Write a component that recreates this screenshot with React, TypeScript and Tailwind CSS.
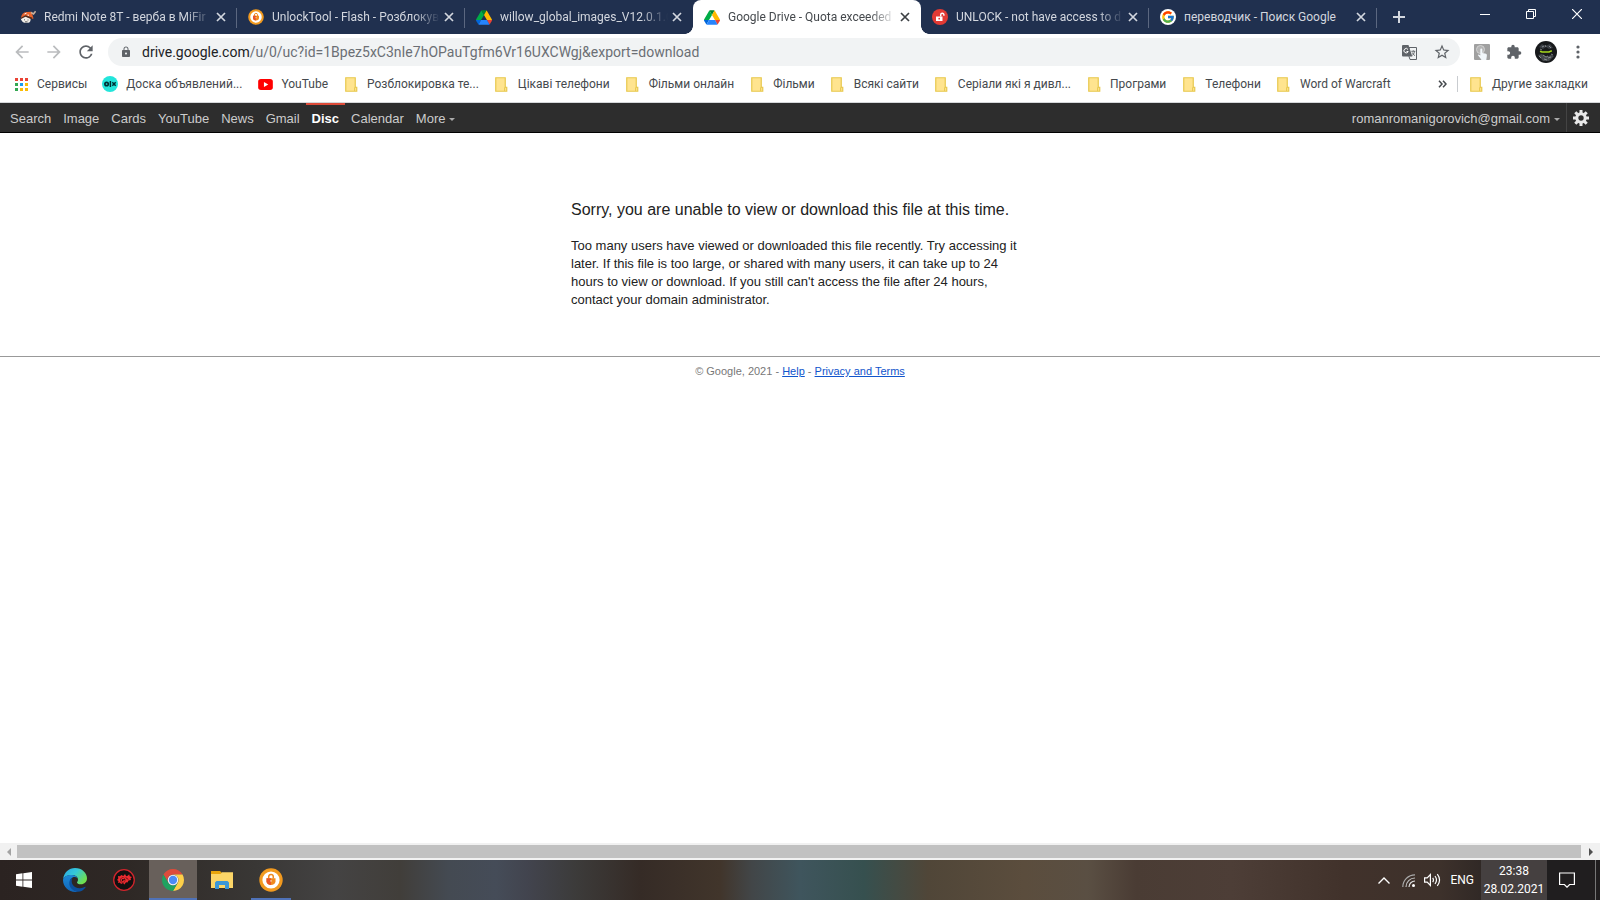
import React from "react";
import { FcGoogle } from "react-icons/fc";
import { MdExtension, MdStarBorder, MdLock, MdRefresh, MdArrowBack, MdArrowForward } from "react-icons/md";

const ui = "font-['Roboto','Noto_Sans',sans-serif]";
const arial = "font-['Liberation_Sans',Arial,sans-serif]";

function DriveLogo() {
  return (
    <svg viewBox="0 0 87.3 78" className="h-[15px] w-4">
      <path fill="#0066da" d="m6.6 66.85 3.85 6.65c.8 1.4 1.95 2.5 3.3 3.3l13.75-23.8h-27.5c0 1.55.4 3.1 1.2 4.5z" />
      <path fill="#00ac47" d="m43.65 25-13.75-23.8c-1.35.8-2.5 1.9-3.3 3.3l-25.4 44a9.06 9.06 0 0 0 -1.2 4.5h27.5z" />
      <path fill="#ea4335" d="m73.55 76.8c1.35-.8 2.5-1.9 3.3-3.3l1.6-2.75 7.65-13.25c.8-1.4 1.2-2.95 1.2-4.5h-27.502l5.852 11.5z" />
      <path fill="#00832d" d="m43.65 25 13.75-23.8c-1.35-.8-2.9-1.2-4.5-1.2h-18.5c-1.6 0-3.15.45-4.5 1.2z" />
      <path fill="#2684fc" d="m59.8 53h-32.3l-13.75 23.8c1.35.8 2.9 1.2 4.5 1.2h50.8c1.6 0 3.15-.45 4.5-1.2z" />
      <path fill="#ffba00" d="m73.4 26.5-12.7-22c-.8-1.4-1.95-2.5-3.3-3.3l-13.75 23.8 16.15 28h27.45c0-1.55-.4-3.1-1.2-4.5z" />
    </svg>
  );
}

function FirmLogo() {
  return (
    <svg viewBox="0 0 16 16" className="h-4 w-4">
      <path d="M1 9Q1.500 3.300 6.500 3L11.500 2.800L13.500 9.500L10.500 10z" fill="#e8632c" />
      <path d="M.8 9.500L5 7L10.500 9.500Q11 12.800 8.500 13.800H4.500Q1.500 13 .8 9.500z" fill="#f3efe9" />
      <path d="M.8 8.700L5.500 6.200L12.500 8.800L11.500 10.300L5.500 7.800L1 10z" fill="#4a2c22" />
      <path d="M4.500 5l2-.8M7.500 6l1.500.3" stroke="#fff" strokeWidth="1" />
      <path d="M11 3.500L13.500 5L15.600 2.200" stroke="#c9b09c" strokeWidth="1.600" fill="none" />
      <path d="M4 10.800h1M7.500 11h1M5 12.800h2.500" stroke="#555" strokeWidth=".9" />
    </svg>
  );
}

function UnlockToolLogo({ className }: { className: string }) {
  return (
    <svg viewBox="0 0 24 24" className={className}>
      <circle cx="12" cy="12" r="11.700" fill="#f29a1f" />
      <circle cx="12" cy="12" r="8.600" fill="#fff" />
      <path d="M9.700 10.500V9a2.300 2.300 0 0 1 4.600-.3v1.800" fill="none" stroke="#f08a1e" strokeWidth="1.500" />
      <path d="M7.500 10.200h9v3a4.500 3.900 0 0 1-9 0z" fill="#f08a1e" />
      <path d="M7.500 10.200H12v6.900a4.500 3.900 0 0 1-4.500-3.900z" fill="#e8562a" />
      <path d="M11.600 12h.8v1.800h-.8z" fill="#fff" />
    </svg>
  );
}

function RedLockLogo() {
  return (
    <svg viewBox="0 0 16 16" className="h-4 w-4">
      <circle cx="8" cy="8" r="8" fill="#e13a34" />
      <path d="M4 7.500h6.500v4.500H4z" fill="#fff" />
      <path d="M8.700 7.500V5.800a1.600 1.600 0 0 1 3.200 0v1" fill="none" stroke="#fff" strokeWidth="1.400" />
      <circle cx="7.200" cy="9.700" r=".9" fill="#e13a34" />
    </svg>
  );
}

function Folder() {
  return (
    <svg viewBox="0 0 13 15" className="h-[15px] w-[13px]">
      <path d="M.75.75h9.500v9.500h1.500v4H.75z" fill="#ffe48f" stroke="#e8c84e" strokeWidth="1.200" />
      <path d="M9.600 14V11q0-.8.9-.8" fill="none" stroke="#e8c84e" strokeWidth="1" />
    </svg>
  );
}

function AppsGrid() {
  const colors = ["#ea4335", "#ea4335", "#ea4335", "#34a853", "#1a9cf0", "#fbbc05", "#34a853", "#fbbc05", "#fbbc05"];
  return (
    <svg viewBox="0 0 13 13" className="h-[13px] w-[13px]">
      {colors.map((c, i) => (
        <rect key={i} x={(i % 3) * 5} y={Math.floor(i / 3) * 5} width="3" height="3" fill={c} />
      ))}
    </svg>
  );
}

function OlxLogo() {
  return (
    <svg viewBox="0 0 16 16" className="h-4 w-4">
      <circle cx="8" cy="8" r="8" fill="#23e5db" />
      <circle cx="4.600" cy="8" r="1.700" fill="none" stroke="#002f34" strokeWidth="1.700" />
      <path d="M8.400 5v6" stroke="#002f34" strokeWidth="1.500" />
      <path d="M10.300 6.300l3.400 3.400M13.700 6.300l-3.400 3.400" stroke="#002f34" strokeWidth="1.500" />
    </svg>
  );
}

function YouTubeLogo() {
  return (
    <svg viewBox="0 0 16 12" className="h-[11px] w-[15px]">
      <rect width="16" height="12" rx="3" fill="#f00" />
      <path d="M6.300 3.300v5.400L11 6z" fill="#fff" />
    </svg>
  );
}

function CloseX({ className = "" }: { className?: string }) {
  return (
    <svg viewBox="0 0 10 10" className={"h-[10px] w-[10px] " + className}>
      <path d="M1 1l8 8M9 1l-8 8" stroke="currentColor" strokeWidth="1.700" fill="none" />
    </svg>
  );
}

type Tab = { title: string; icon: React.ReactNode; active?: boolean; noSep?: boolean };

const tabs: Tab[] = [
  { title: "Redmi Note 8T - верба в MiFir", icon: <FirmLogo /> },
  { title: "UnlockTool - Flash - Розблокув", icon: <UnlockToolLogo className="h-4 w-4" /> },
  { title: "willow_global_images_V12.0.1.0", icon: <DriveLogo />, noSep: true },
  { title: "Google Drive - Quota exceeded", icon: <DriveLogo />, active: true },
  { title: "UNLOCK - not have access to d", icon: <RedLockLogo /> },
  {
    title: "переводчик - Поиск Google",
    icon: (
      <span className="flex h-4 w-4 items-center justify-center rounded-full bg-white">
        <FcGoogle className="h-[14px] w-[14px]" />
      </span>
    ),
  },
];

function TabItem({ tab, last }: { tab: Tab; last: boolean }) {
  return (
    <div
      className={
        "relative flex h-[34px] w-[228px] min-w-0 shrink items-center px-[11px] " +
        (tab.active ? "rounded-t-lg bg-white text-[#45494d]" : "text-[#d3d7df]")
      }
    >
      {tab.active && (
        <>
          <span className="absolute bottom-0 -left-2 h-2 w-2 bg-[radial-gradient(circle_at_0_0,transparent_7.5px,#fff_8px)]" />
          <span className="absolute bottom-0 -right-2 h-2 w-2 bg-[radial-gradient(circle_at_100%_0,transparent_7.5px,#fff_8px)]" />
        </>
      )}
      <span className="shrink-0">{tab.icon}</span>
      <a
        href="#"
        className={
          "ml-2 min-w-0 flex-1 overflow-hidden whitespace-nowrap text-[12px] leading-4 " +
          (last ? "" : "[mask-image:linear-gradient(to_right,black_84%,transparent)]")
        }
      >
        {tab.title}
      </a>
      <button type="button" aria-label="Закрыть вкладку" className="ml-1 shrink-0">
        <CloseX className={tab.active ? "text-[#3c4043]" : ""} />
      </button>
      {!tab.active && !tab.noSep && <span className="absolute top-2 right-0 h-5 w-px bg-[#5b6780]" />}
    </div>
  );
}

function TabStrip() {
  return (
    <div className="flex h-[34px] items-center bg-[#20304f] pl-[9px]">
      {tabs.map((t, i) => (
        <TabItem key={t.title} tab={t} last={i === tabs.length - 1} />
      ))}
      <button type="button" aria-label="Новая вкладка" className="ml-4 shrink-0 text-[#d3d7df]">
        <svg viewBox="0 0 12 12" className="h-3 w-3">
          <path d="M6 0v12M0 6h12" stroke="currentColor" strokeWidth="2" />
        </svg>
      </button>
      <div className="ml-auto flex shrink-0 self-start text-white">
        <button type="button" aria-label="Свернуть" className="flex h-7 w-[46px] items-center justify-center">
          <svg viewBox="0 0 10 10" className="h-[10px] w-[10px]"><path d="M0 5.500h10" stroke="currentColor" /></svg>
        </button>
        <button type="button" aria-label="Развернуть" className="flex h-7 w-[46px] items-center justify-center">
          <svg viewBox="0 0 10 10" className="h-[10px] w-[10px]" fill="none" stroke="currentColor">
            <path d="M.5 2.500h7v7h-7zM2.500 2.500v-2h7v7h-2" />
          </svg>
        </button>
        <button type="button" aria-label="Закрыть" className="flex h-7 w-[46px] items-center justify-center">
          <svg viewBox="0 0 10 10" className="h-[10px] w-[10px]"><path d="M0 0l10 10M10 0L0 10" stroke="currentColor" strokeWidth="1.200" /></svg>
        </button>
      </div>
    </div>
  );
}

function TranslateIcon() {
  return (
    <svg viewBox="0 0 15 15" className="h-[15px] w-[15px]">
      <path d="M7 2.500h7.500v12H8L7 11.500z" fill="#f1f3f4" stroke="#5f6368" />
      <path d="M0 1Q0 0 1 0H6.500L10.300 11.500H1a1 1 0 0 1-1-1z" fill="#5f6368" />
      <path d="M6 4.500A2.200 2.200 0 1 0 6.200 6.500H4.500" fill="none" stroke="#fff" strokeWidth="1" />
      <path d="M9.300 6.300h4M11.300 5.300v1M12.600 6.300Q12 9.500 10 10.700M10.300 7.500Q11 9.500 13 10.700" fill="none" stroke="#5f6368" strokeWidth=".9" />
    </svg>
  );
}

function Toolbar() {
  return (
    <div className="flex h-9 items-center bg-white pl-3 pr-[14px]">
      <div className="flex items-center gap-3">
        <button type="button" aria-label="Назад" className="text-[#babcbe]"><MdArrowBack className="h-5 w-5" /></button>
        <button type="button" aria-label="Вперёд" className="text-[#babcbe]"><MdArrowForward className="h-5 w-5" /></button>
        <button type="button" aria-label="Обновить" className="text-[#5f6368]"><MdRefresh className="h-5 w-5" /></button>
      </div>
      <div className="ml-3 flex h-7 min-w-0 flex-1 items-center rounded-full bg-[#f1f3f4] pl-3 pr-[9px]">
        <MdLock className="h-3 w-3 shrink-0 text-[#5f6368]" />
        <a href="#" className="ml-[10px] min-w-0 flex-1 truncate text-[14px] leading-5 text-[#6b6f74]">
          <span className="text-[#202124]">drive.google.com</span>/u/0/uc?id=1Bpez5xC3nIe7hOPauTgfm6Vr16UXCWgj&amp;export=download
        </a>
        <button type="button" aria-label="Перевести" className="ml-3"><TranslateIcon /></button>
        <button type="button" aria-label="В закладки" className="ml-4 text-[#5f6368]"><MdStarBorder className="h-[18px] w-[18px]" /></button>
      </div>
      <button type="button" aria-label="Расширение" className="ml-[14px]">
        <svg viewBox="0 0 16 16" className="h-4 w-4">
          <rect width="16" height="16" rx="1" fill="#a0a0a0" />
          <circle cx="6.500" cy="5.500" r="4" fill="#b4b4b4" stroke="#d2d2d2" />
          <path d="M6.500 14.500L3.800 11l1-.6 1.500 1V5.500a1 1 0 0 1 2 0V9l3.800.8q1 .4.8 1.700L12.300 16H7.500z" fill="#f2f7fb" />
        </svg>
      </button>
      <button type="button" aria-label="Расширения" className="ml-4 text-[#5f6368]"><MdExtension className="h-4 w-4" /></button>
      <button type="button" aria-label="Профиль" className="ml-[13px]">
        <svg viewBox="0 0 22 22" className="h-[22px] w-[22px]">
          <circle cx="11" cy="11" r="11" fill="#17191b" />
          <path d="M4 6l3-3 3 2 5-2 3 4-4 1-3-2-3 2z" fill="#3a3e44" />
          <path d="M3 14l4-1 4 3 5-2 3 1-5 5-6 0z" fill="#45494d" />
          <path d="M8 14l3 2 2-1M14 5l2 2M5 8l2 1M9 18l3 1M13 17l3-1M7 6l2-1M4 15l2 2M16 13l2 1M10 4l1 2" stroke="#9b9fa2" strokeWidth=".8" fill="none" />
          <path d="M5 10.300l2 .7h7l2.800-1.300" stroke="#a5d61e" strokeWidth="1.500" fill="none" />
        </svg>
      </button>
      <button type="button" aria-label="Меню" className="ml-[13px] text-[#5f6368]">
        <svg viewBox="0 0 16 16" className="h-4 w-4" fill="currentColor">
          <circle cx="8" cy="3" r="1.600" /><circle cx="8" cy="8" r="1.600" /><circle cx="8" cy="13" r="1.600" />
        </svg>
      </button>
    </div>
  );
}

const bookmarks: { label: string; icon?: React.ReactNode }[] = [
  { label: "Сервисы", icon: <AppsGrid /> },
  { label: "Доска объявлений...", icon: <OlxLogo /> },
  { label: "YouTube", icon: <YouTubeLogo /> },
  { label: "Розблокировка те..." },
  { label: "Цікаві телефони" },
  { label: "Фільми онлайн" },
  { label: "Фільми" },
  { label: "Всякі сайти" },
  { label: "Серіали які я дивл..." },
  { label: "Програми" },
  { label: "Телефони" },
  { label: "Word of Warcraft" },
];

function Bookmark({ label, icon }: { label: string; icon?: React.ReactNode }) {
  return (
    <a href="#" className="flex shrink-0 items-center gap-2 whitespace-nowrap text-[12px] leading-4 text-[#45494d]">
      <span className="flex w-4 items-center justify-center">{icon ?? <Folder />}</span>
      {label}
    </a>
  );
}

function BookmarksBar() {
  return (
    <nav className="flex h-[33px] items-center border-b border-[#d5d7da] bg-white pb-1 pl-[13px] pr-3">
      <div className="flex min-w-0 flex-1 items-center gap-[15px] overflow-hidden">
        {bookmarks.map((b) => (
          <Bookmark key={b.label} {...b} />
        ))}
      </div>
      <button type="button" aria-label="Ещё закладки" className="ml-2 text-[#45494d]">
        <svg viewBox="0 0 9 8" className="h-2 w-[9px]"><path d="M1 .8L4 4 1 7.200M5 .8L8 4 5 7.200" stroke="currentColor" strokeWidth="1.500" fill="none" /></svg>
      </button>
      <span className="mr-[10px] ml-[10px] h-4 w-px bg-[#c9ccd0]" />
      <Bookmark label="Другие закладки" />
    </nav>
  );
}

function Caret() {
  return <span className="ml-1 inline-block border-x-[3px] border-t-[3px] border-x-transparent border-t-[#aaa] align-middle" />;
}

function Gear() {
  return (
    <svg viewBox="0 0 16 16" className="h-4 w-4">
      <g stroke="#e8e8e8" strokeWidth="3">
        <path d="M8 0v4M8 12v4M0 8h4M12 8h4M2.300 2.300l2.800 2.800M10.900 10.900l2.800 2.800M13.700 2.300l-2.800 2.800M5.100 10.900l-2.800 2.800" />
      </g>
      <circle cx="8" cy="8" r="4.200" fill="none" stroke="#e8e8e8" strokeWidth="3" />
    </svg>
  );
}

function GoogleBar() {
  const links = ["Search", "Image", "Cards", "YouTube", "News", "Gmail", "Disc", "Calendar"];
  return (
    <nav className={"flex h-[30px] items-stretch border-b border-black bg-[#2d2d2d] pr-[11px] pl-1 text-[13px] text-[#ccc] " + arial}>
      {links.map((l) => (
        <a
          key={l}
          href="#"
          className={
            "border-t-2 px-1.5 leading-[27px] " +
            (l === "Disc" ? "border-[#dd4b39] font-bold text-white" : "border-transparent")
          }
        >
          {l}
        </a>
      ))}
      <a href="#" className="border-t-2 border-transparent px-1.5 leading-[27px]">More<Caret /></a>
      <a href="#" className="ml-auto border-t-2 border-transparent px-1.5 leading-[27px]">romanromanigorovich@gmail.com<Caret /></a>
      <span className="w-px bg-[#444]" />
      <button type="button" aria-label="Settings" className="ml-1.5"><Gear /></button>
    </nav>
  );
}

function Page() {
  return (
    <main className={"flex-1 bg-white text-[#222] " + arial}>
      <section className="mx-auto w-[458px] pt-[67px] pb-[47px]">
        <h1 className="text-[16px] leading-5">Sorry, you are unable to view or download this file at this time.</h1>
        <p className="mt-[17px] text-[13px] leading-[18px]">
          Too many users have viewed or downloaded this file recently. Try accessing it later. If this file is too large,
          or shared with many users, it can take up to 24 hours to view or download. If you still can't access the file
          after 24 hours, contact your domain administrator.
        </p>
      </section>
      <footer className="border-t border-[#999] pt-2 text-center text-[11px] leading-[13px] text-[#777]">
        © Google, 2021 - <a href="#" className="text-[#15c] underline">Help</a> -{" "}
        <a href="#" className="text-[#15c] underline">Privacy and Terms</a>
      </footer>
    </main>
  );
}

function ScrollBar() {
  return (
    <div className="flex h-[17px] items-center bg-[#f1f1f1]">
      <button type="button" aria-label="Scroll left" className="flex w-[17px] justify-center">
        <svg viewBox="0 0 4 8" className="h-2 w-1"><path d="M4 0v8L0 4z" fill="#a3a3a3" /></svg>
      </button>
      <div className="h-[13px] flex-1 bg-[#c1c1c1]" />
      <button type="button" aria-label="Scroll right" className="flex w-[19px] justify-center">
        <svg viewBox="0 0 4 8" className="h-2 w-1"><path d="M0 0v8l4-4z" fill="#505050" /></svg>
      </button>
    </div>
  );
}

function EdgeLogo() {
  return (
    <svg viewBox="0 0 24 24" className="h-6 w-6">
      <defs>
        <linearGradient id="edgeTop" x1="0" y1="0" x2="1" y2=".6">
          <stop offset="0" stopColor="#2aa7e8" /><stop offset=".5" stopColor="#35c8d8" /><stop offset="1" stopColor="#6fe04f" />
        </linearGradient>
        <linearGradient id="edgeLeft" x1="0" y1="0" x2="0" y2="1">
          <stop offset="0" stopColor="#1c8ad8" /><stop offset="1" stopColor="#1166b8" />
        </linearGradient>
      </defs>
      <path d="M.2 10.800C1 4.500 6 0 12 0c7 0 12 5 12 10.300 0 3.600-2.700 6-6 6-2.700 0-4-1-4-1.800 0-.6 1-1.100 1-2.700C15 9 12.300 7 8.800 7 4.500 7 1.300 8.500.2 10.800z" fill="url(#edgeTop)" />
      <path d="M0 12C.3 8.700 4 7 8.800 7c3 0 5 1.400 5.800 3-1-.8-2-1-3-1-3 0-4.500 2.500-4.500 5.300 0 4.500 3 7.900 7.400 9.400C7 25 0 19.500 0 12z" fill="url(#edgeLeft)" />
      <path d="M8.800 11.800C8 17 12 20.500 17 20.200c2 0 3.700-.7 5-1.400.5-.2.8.2.5.7-2 3-5 4.500-8.300 4.300-5-.8-8.200-5-7.900-9 .2-3 1.300-4.600 3.500-5.400C9 10 8.900 11 8.800 11.800z" fill="#0c4f9c" />
    </svg>
  );
}

function RedToolLogo() {
  return (
    <svg viewBox="0 0 22 22" className="h-[22px] w-[22px]">
      <circle cx="11" cy="11" r="10.300" fill="#111" stroke="#d0252c" strokeWidth="1.300" />
      <path d="M5 7l2 .3 1.300-1.300 2 1 1.700-2 1.200 2.200 1.500-.5 1.500-1.500.5 2 2.300.8-1.500 1.500.5 1.500-2.500.5-1 2-1.500-.3-1.500 2.300-1.500-1.500-2 1-1-1.500L5 14l.5-2L4 11l1.300-1.500z" fill="#ee2a30" />
      <circle cx="9.800" cy="11" r="2.500" fill="#181010" />
      <path d="M11.400 10.200a1.700 1.700 0 1 0 0 1.700h-1.300" fill="none" stroke="#ee2a30" strokeWidth="1.100" />
      <path d="M13 8.500l2 2" stroke="#181010" strokeWidth=".9" />
    </svg>
  );
}

function ChromeLogo() {
  return (
    <svg viewBox="2 2 44 44" className="h-[22px] w-[22px]">
      <path fill="#de4b3b" d="M24 13H43.050A22 22 0 0 0 4.950 13L14.470 29.500A11 11 0 0 1 24 13z" />
      <path fill="#fdcf49" d="M33.530 29.500L24 46A22 22 0 0 0 43.050 13H24A11 11 0 0 1 33.530 29.500z" />
      <path fill="#1fa260" d="M14.470 29.500L4.950 13A22 22 0 0 0 24 46L33.530 29.500A11 11 0 0 1 14.470 29.500z" />
      <circle cx="24" cy="24" r="10.500" fill="#f4f4f4" />
      <circle cx="24" cy="24" r="8.300" fill="#4c8bf5" />
    </svg>
  );
}

function ExplorerLogo() {
  return (
    <svg viewBox="0 0 22 18" className="h-[18px] w-[22px]">
      <path d="M0 0h9l1.500 1.500V4H0z" fill="#e8a50c" />
      <path d="M0 3h9.500L11 1.200h11V17H0z" fill="#fbd567" />
      <path d="M4 18v-6.500L5.500 10h11l1.500 1.500V18h-4v-4H8v4z" fill="#3a97d8" />
    </svg>
  );
}

function WindowsLogo() {
  return (
    <svg viewBox="0 0 16 16" className="h-4 w-4" fill="#fff">
      <path d="M0 2.200L6.500 1.300v6.200H0zM7.300 1.200L16 0v7.500H7.300zM0 8.400h6.500v6.300L0 13.800zM7.300 8.400H16V16l-8.700-1.200z" />
    </svg>
  );
}

function Taskbar() {
  const cell = "flex h-10 w-12 items-center justify-center";
  return (
    <div
      className={
        "flex h-10 shrink-0 items-stretch text-[12px] text-white bg-[linear-gradient(90deg,#2b2321_0%,#2e2825_8%,#393735_16%,#444343_21%,#413e3a_25%,#444a52_28%,#454c58_31%,#42444e_33%,#3c3b3a_36%,#352b26_40%,#41352b_45%,#424648_47%,#3f555d_50%,#36504f_54%,#504638_58%,#5b4d3d_64%,#5a4f43_68%,#4a3c34_71%,#4d3e37_77%,#41322b_84%,#3d312b_90%,#201e1f_96%)] " +
        ui
      }
    >
      <button type="button" aria-label="Start" className={cell}><WindowsLogo /></button>
      <button type="button" aria-label="Edge" className={cell + " ml-[3px]"}><EdgeLogo /></button>
      <button type="button" aria-label="Tool" className={cell + " ml-px"}><RedToolLogo /></button>
      <button type="button" aria-label="Chrome" className={cell + " ml-px border-b-2 border-[#4f72b8] bg-[#68605b] pt-[2px]"}><ChromeLogo /></button>
      <button type="button" aria-label="Explorer" className={cell + " ml-px"}><ExplorerLogo /></button>
      <button type="button" aria-label="UnlockTool" className="ml-[5px] flex h-10 w-10 items-center justify-center border-b-2 border-[#4f72b8] pt-[2px]">
        <UnlockToolLogo className="h-6 w-6" />
      </button>
      <div className="ml-auto flex items-center">
        <button type="button" aria-label="Show hidden icons" className="mr-3">
          <svg viewBox="0 0 12 7" className="h-[7px] w-3"><path d="M.5 6.500L6 1l5.500 5.500" fill="none" stroke="#fff" strokeWidth="1.400" /></svg>
        </button>
        <svg viewBox="0 0 13 13" className="h-[13px] w-[13px]" fill="none" strokeWidth="1.200">
          <path d="M.8 13A12.200 12.200 0 0 1 13 .8" stroke="#aaa" />
          <path d="M4 13A9 9 0 0 1 13 4" stroke="#bbb" />
          <path d="M7 13A6 6 0 0 1 13 7" stroke="#ddd" />
          <circle cx="11.500" cy="11.500" r="1.500" fill="#fff" />
        </svg>
        <svg viewBox="0 0 17 14" className="ml-[9px] h-[14px] w-[17px]" fill="none" stroke="#fff" strokeWidth="1.200">
          <path d="M.6 4.800h2.600L6.400 1.500v11L3.200 9.200H.6z" />
          <path d="M8.700 4.800q1.500 2.200 0 4.400M11 3q3 4 0 8M13.300 1.200q4.500 5.800 0 11.600" />
        </svg>
        <span className="mr-[7px] ml-[9px]">ENG</span>
        <time className="flex h-10 w-[66px] flex-col items-center justify-center bg-[#454040] leading-[18px]">
          <span>23:38</span>
          <span>28.02.2021</span>
        </time>
        <button type="button" aria-label="Notifications" className="mx-3">
          <svg viewBox="0 0 16 16" className="h-4 w-4" fill="none" stroke="#fff" strokeWidth="1.200">
            <path d="M.6 1h14.800v11.500h-4.800L8 15.200l-2.600-2.700H.6z" />
          </svg>
        </button>
        <span className="mr-1 ml-2 h-10 w-px bg-[#777]" />
      </div>
    </div>
  );
}

export default function App() {
  return (
    <div className={"flex min-h-screen flex-col bg-white " + ui}>
      <TabStrip />
      <Toolbar />
      <BookmarksBar />
      <GoogleBar />
      <Page />
      <ScrollBar />
      <Taskbar />
    </div>
  );
}
